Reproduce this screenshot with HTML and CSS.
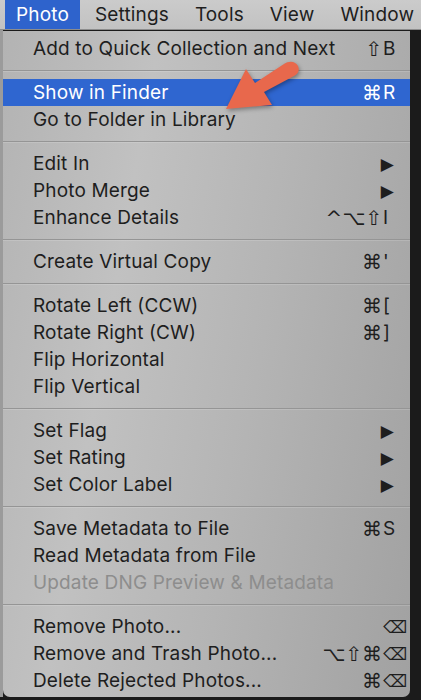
FILE: index.html
```html
<!DOCTYPE html>
<html lang="en">
<head>
    <meta charset="UTF-8" />
    <title>Photo menu</title>
    <link rel="stylesheet" href="styles.css">
</head>
<body>
<div class="menubar">
    <span class="menubar-item active">Photo</span>
    <span class="menubar-item">Settings</span>
    <span class="menubar-item">Tools</span>
    <span class="menubar-item">View</span>
    <span class="menubar-item">Window</span>
</div>
<div class="screen">
    <div class="menu">
        <div class="item"><span class="label">Add to Quick Collection and Next</span><span class="mods">⇧</span><span class="key">B</span></div>
        <div class="sep"></div>
        <div class="item selected"><span class="label">Show in Finder</span><span class="mods">⌘</span><span class="key">R</span></div>
        <div class="item"><span class="label">Go to Folder in Library</span></div>
        <div class="sep"></div>
        <div class="item"><span class="label">Edit In</span><span class="arrow">▶</span></div>
        <div class="item"><span class="label">Photo Merge</span><span class="arrow">▶</span></div>
        <div class="item"><span class="label">Enhance Details</span><span class="mods">^⌥⇧</span><span class="key">I</span></div>
        <div class="sep"></div>
        <div class="item"><span class="label">Create Virtual Copy</span><span class="mods">⌘</span><span class="key">'</span></div>
        <div class="sep"></div>
        <div class="item"><span class="label">Rotate Left (CCW)</span><span class="mods">⌘</span><span class="key">[</span></div>
        <div class="item"><span class="label">Rotate Right (CW)</span><span class="mods">⌘</span><span class="key">]</span></div>
        <div class="item"><span class="label">Flip Horizontal</span></div>
        <div class="item"><span class="label">Flip Vertical</span></div>
        <div class="sep"></div>
        <div class="item"><span class="label">Set Flag</span><span class="arrow">▶</span></div>
        <div class="item"><span class="label">Set Rating</span><span class="arrow">▶</span></div>
        <div class="item"><span class="label">Set Color Label</span><span class="arrow">▶</span></div>
        <div class="sep"></div>
        <div class="item"><span class="label">Save Metadata to File</span><span class="mods">⌘</span><span class="key">S</span></div>
        <div class="item"><span class="label">Read Metadata from File</span></div>
        <div class="item disabled"><span class="label">Update DNG Preview &amp; Metadata</span></div>
        <div class="sep"></div>
        <div class="item"><span class="label">Remove Photo...</span><span class="key del">⌫</span></div>
        <div class="item"><span class="label">Remove and Trash Photo...</span><span class="mods">⌥⇧⌘</span><span class="key del">⌫</span></div>
        <div class="item"><span class="label">Delete Rejected Photos...</span><span class="mods">⌘</span><span class="key del">⌫</span></div>
    </div>
    <svg class="pointer" width="90" height="60" viewBox="0 0 90 60">
        <path d="M85 8 C87 13 85 16 81 18 L51 34 L59 47 L13 51 L33 11 L42 25 L71 6 C77 2 83 4 85 8 Z" fill="#e8684c"/>
    </svg>
</div>
</body>
</html>
```

FILE: styles.css
```css
body {
    margin: 0;
    background: #1b1b1b;
    font-family: Inter, "Noto Sans", "DejaVu Sans", sans-serif;
    color: #1e1e1e;
}
.menubar {
    display: flex;
    height: 29px;
    padding-left: 5px;
    background: linear-gradient(#cbcbcb, #c2c2c2);
    border-bottom: 1px solid #8c8c8c;
    font-size: 19px;
    letter-spacing: 0.15px;
    line-height: 29px;
    white-space: nowrap;
    overflow: hidden;
}
.menubar-item {
    padding: 0 11px;
    margin-right: 4px;
}
.menubar-item.active {
    background: #2e63cc;
    color: #fff;
}
.screen {
    position: relative;
    background: linear-gradient(to right, #9b9b9b 0 3px, #1b1b1b 3px);
    padding-top: 1px;
}
.menu {
    margin-left: 3px;
    width: 407px;
    padding: 4px 0 3px;
    background: linear-gradient(100deg, #b3b3b3 0%, #c1c1c1 30%, #b4b4b4 60%, #a1a1a1 100%);
    border-radius: 0 0 7px 7px;
    font-size: 19px;
    letter-spacing: 0.15px;
}
.item {
    display: flex;
    align-items: center;
    height: 27px;
    padding: 0 3px 0 30px;
}
.item.selected {
    background: #2f66d0;
    color: #fff;
}
.item.disabled {
    color: #8d8d8d;
}
.label {
    flex: 1;
}
.mods {
    font-family: "DejaVu Sans", sans-serif;
    font-size: 20px;
    letter-spacing: 0;
}
.key {
    width: 24px;
    padding-left: 1px;
}
.key.del {
    font-family: "DejaVu Sans", sans-serif;
    font-size: 17px;
    letter-spacing: 0;
}
.arrow {
    font-family: "DejaVu Sans", sans-serif;
    font-size: 17px;
    margin-right: 13px;
}
.sep {
    height: 1px;
    margin: 8px 0;
    background: #959595;
    box-shadow: 0 1px 0 rgba(255, 255, 255, 0.15);
}
.pointer {
    position: absolute;
    left: 213px;
    top: 28px;
    filter: drop-shadow(1px 2px 2px rgba(0, 0, 0, 0.35));
}
```
